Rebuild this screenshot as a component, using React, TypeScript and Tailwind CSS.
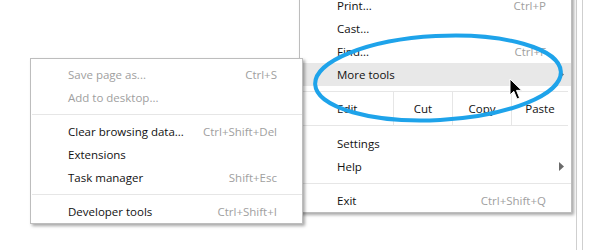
import { memo } from 'react';

type Item = { label: string; shortcut?: string; disabled?: boolean; arrow?: boolean; active?: boolean };

const subItems: (Item | 'sep')[] = [
  { label: 'Save page as...', shortcut: 'Ctrl+S', disabled: true },
  { label: 'Add to desktop...', disabled: true },
  'sep',
  { label: 'Clear browsing data...', shortcut: 'Ctrl+Shift+Del' },
  { label: 'Extensions' },
  { label: 'Task manager', shortcut: 'Shift+Esc' },
  'sep',
  { label: 'Developer tools', shortcut: 'Ctrl+Shift+I' },
];

function Arrow() {
  return (
    <svg width="5" height="9" viewBox="0 0 5 9" className="absolute right-[7px] top-[7px]">
      <path d="M0 0 L5 4.5 L0 9 Z" fill="#6b6b6b" />
    </svg>
  );
}

function Row({ item }: { item: Item }) {
  return (
    <div
      className={`relative flex h-[23px] items-center justify-between pl-[37px] pr-[25px] ${
        item.active ? 'bg-[#e8e8e8]' : ''
      } ${item.disabled ? 'text-[#a0a0a0]' : 'text-[#111]'}`}
    >
      <span>{item.label}</span>
      {item.shortcut && <span className="text-[#a0a0a0]">{item.shortcut}</span>}
      {item.arrow && <Arrow />}
    </div>
  );
}

function Separator() {
  return <div className="my-[5px] ml-[1px] h-px bg-[#e6e6e6]" />;
}

function App() {
  return (
    <div
      className="relative h-[250px] w-[600px] overflow-hidden bg-white text-[11.5px]"
      style={{ fontFamily: '"Open Sans", "Noto Sans", sans-serif' }}
    >
      {/* window edge on the right */}
      <div className="absolute top-0 bottom-0 left-[576px] w-[7px] border-x border-[#cfcfcf]" />

      {/* main menu */}
      <div className="absolute left-[299px] top-[-7px] w-[273px] border border-[#bdbdbd] bg-white shadow-[2px_2px_3px_rgba(0,0,0,0.35)]">
        <Row item={{ label: 'Print...', shortcut: 'Ctrl+P' }} />
        <Row item={{ label: 'Cast...' }} />
        <Row item={{ label: 'Find...', shortcut: 'Ctrl+F' }} />
        <Row item={{ label: 'More tools', arrow: true, active: true }} />
        <div className="mt-[5px] mr-[3px] flex h-[35px] border-y border-[#e6e6e6] text-[#111]">
          <div className="flex flex-1 items-center pl-[37px]">Edit</div>
          <div className="flex w-[59px] items-center justify-center border-l border-[#e6e6e6]">Cut</div>
          <div className="flex w-[59px] items-center justify-center border-l border-[#e6e6e6]">Copy</div>
          <div className="flex w-[57px] items-center justify-center border-l border-[#e6e6e6]">Paste</div>
        </div>
        <div className="mt-[6px]">
          <Row item={{ label: 'Settings' }} />
          <Row item={{ label: 'Help', arrow: true }} />
        </div>
        <Separator />
        <Row item={{ label: 'Exit', shortcut: 'Ctrl+Shift+Q' }} />
      </div>

      {/* More tools submenu */}
      <div className="absolute left-[30px] top-[58px] w-[273px] border border-[#bdbdbd] bg-white pt-[4px] shadow-[2px_2px_3px_rgba(0,0,0,0.35)]">
        {subItems.map((it, i) => (it === 'sep' ? <Separator key={i} /> : <Row key={i} item={it} />))}
      </div>

      {/* annotation ellipse */}
      <svg className="pointer-events-none absolute left-0 top-0" width="600" height="250">
        <ellipse cx="438" cy="78" rx="123" ry="42" transform="rotate(-3 438 78)" fill="none" stroke="#1ea3ea" strokeWidth="4" />
      </svg>

      {/* mouse cursor */}
      <svg className="absolute left-[509px] top-[78px]" width="14" height="23" viewBox="0 0 14 23">
        <path d="M1 1 L1 17 L4.8 13.3 L8 21 L10.6 19.9 L7.5 12.4 L12.7 12.4 Z" fill="#000" stroke="#fff" strokeWidth="1" />
      </svg>
    </div>
  );
}

export default memo(App);
